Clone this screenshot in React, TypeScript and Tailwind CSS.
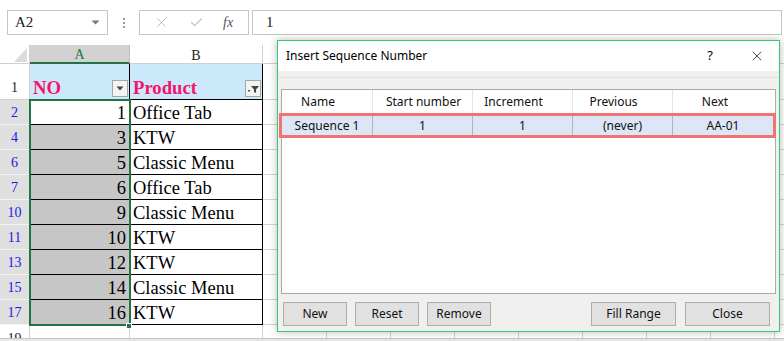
import React from 'react';
import { X, Check } from 'lucide-react';

const rows = [
  { n: '2', a: '1', b: 'Office Tab' },
  { n: '4', a: '3', b: 'KTW' },
  { n: '6', a: '5', b: 'Classic Menu' },
  { n: '7', a: '6', b: 'Office Tab' },
  { n: '10', a: '9', b: 'Classic Menu' },
  { n: '11', a: '10', b: 'KTW' },
  { n: '13', a: '12', b: 'KTW' },
  { n: '15', a: '14', b: 'Classic Menu' },
  { n: '17', a: '16', b: 'KTW' },
];

const extraCols = [0, 1, 2, 3, 4, 5, 6, 7, 8];
const serif = "font-['Liberation_Serif','Times_New_Roman',serif]";
const ui = "font-['Noto_Sans','Open_Sans',sans-serif]";

const Gridfill: React.FC = () => (
  <>
    {extraCols.map((c) => (
      <div key={c} className="w-[64px] shrink-0 border-r border-b border-[#d4d4d4]" />
    ))}
  </>
);

const FilterBtn: React.FC<{ funnel?: boolean }> = ({ funnel }) => (
  <div className="w-[16px] h-[17px] border border-[#a6a6a6] bg-[#f3f3f3] flex items-center justify-center mb-[1px]">
    {funnel ? (
      <svg width="12" height="11" viewBox="0 0 12 11">
        <path d="M4 3h8l-3 3.5V10l-2-1V6.5z" fill="#444" />
        <path d="M0.5 7h3l-1.5 2z" fill="#444" />
      </svg>
    ) : (
      <svg width="8" height="5" viewBox="0 0 8 5">
        <path d="M0.5 0.5h7L4 4.5z" fill="#444" />
      </svg>
    )}
  </div>
);

const Btn: React.FC<{ label: string; w: string }> = ({ label, w }) => (
  <div className={`${w} h-[24px] border border-[#adadad] bg-[#e1e1e1] flex items-center justify-center text-[12px] text-[#111]`}>
    {label}
  </div>
);

const cols = [
  { w: 'w-[91px]', h: 'Name', hp: 'pr-[18px]', v: 'Sequence 1' },
  { w: 'w-[100px]', h: 'Start number', hp: 'pl-[2px]', v: '1' },
  { w: 'w-[100px]', h: 'Increment', hp: 'pr-[18px]', v: '1' },
  { w: 'w-[100px]', h: 'Previous', hp: 'pr-[18px]', v: '(never)' },
  { w: 'w-[101px]', h: 'Next', hp: 'pr-[17px]', v: 'AA-01' },
];

const App: React.FC = () => {
  return (
    <div className="relative w-[784px] h-[341px] overflow-hidden bg-white">
      {/* formula bar */}
      <div className="h-[45px] flex items-start pt-[10px]">
        <div className={`ml-[7px] w-[101px] h-[25px] border border-[#c6c6c6] flex items-center justify-between pl-[7px] pr-[7px] ${serif} text-[15px] text-[#222]`}>
          <span>A2</span>
          <svg width="9" height="5" viewBox="0 0 9 5">
            <path d="M0.5 0.5h8L4.5 4.5z" fill="#777" />
          </svg>
        </div>
        <div className="w-[31px] h-[25px] flex flex-col items-center justify-center gap-[2px]">
          <span className="w-[2px] h-[2px] bg-[#999]" />
          <span className="w-[2px] h-[2px] bg-[#999]" />
          <span className="w-[2px] h-[2px] bg-[#999]" />
        </div>
        <div className="w-[110px] h-[25px] border border-[#c6c6c6] flex items-center pl-[14px]">
          <X size={15} strokeWidth={1.5} color="#b8b8b8" />
          <Check size={15} strokeWidth={2} color="#c4c4c4" className="ml-[20px]" />
          <span className={`ml-[19px] ${serif} italic text-[14px] text-[#555]`}>fx</span>
        </div>
        <div className={`ml-[3px] mr-[2px] flex-1 h-[25px] border border-[#c6c6c6] flex items-center pl-[13px] ${serif} text-[15px] text-[#222]`}>
          1
        </div>
      </div>

      {/* sheet */}
      <div className={`relative h-[293px] overflow-hidden ${serif}`}>
        {/* column headers */}
        <div className="flex h-[19px]">
          <div className="w-[30px] shrink-0 border-r border-b border-[#d0d0d0] bg-white flex items-end justify-end pr-[2px] pb-[1px]">
            <svg width="13" height="14" viewBox="0 0 13 14">
              <path d="M13 0V14H0z" fill="#dcdcdc" />
            </svg>
          </div>
          <div className="w-[100px] shrink-0 bg-[#d2d2d2] border-r border-[#bdbdbd] border-b-2 border-b-[#217346] flex items-center justify-center pt-[2px] text-[14px] text-[#217346]">
            A
          </div>
          <div className="w-[133px] shrink-0 bg-white border-r border-b border-[#d0d0d0] flex items-center justify-center pt-[2px] text-[14px] text-[#222]">
            B
          </div>
          {extraCols.map((c) => (
            <div key={c} className="w-[64px] shrink-0 border-r border-b border-[#d0d0d0]" />
          ))}
        </div>

        {/* row 1 */}
        <div className="flex h-[36px]">
          <div className="w-[30px] shrink-0 border-r border-b border-[#d0d0d0] flex items-end justify-center pb-[1px] text-[14px] text-[#222]">
            1
          </div>
          <div className="w-[100px] shrink-0 bg-[#cce8fb] border-r border-b border-black flex items-end justify-between pl-[3px] pr-[1px] pb-[1px]">
            <span className="text-[18.7px] font-bold text-[#f5146a] leading-[20px]">NO</span>
            <FilterBtn />
          </div>
          <div className="w-[133px] shrink-0 bg-[#cce8fb] border-r border-b border-black flex items-end justify-between pl-[3px] pr-[1px] pb-[1px]">
            <span className="text-[18.7px] font-bold text-[#f5146a] leading-[20px]">Product</span>
            <FilterBtn funnel />
          </div>
          <Gridfill />
        </div>

        {/* data rows */}
        {rows.map((r, i) => (
          <div key={r.n} className="flex h-[25px]">
            <div className="w-[30px] shrink-0 bg-[#dfdfdf] border-r border-[#c8c8c8] border-b border-b-[#f2f2f2] flex items-end justify-center pb-[1px] text-[14px] text-[#1a1ae6]">
              {r.n}
            </div>
            <div className={`w-[100px] shrink-0 ${i === 0 ? 'bg-white' : 'bg-[#c6c6c6]'} border-r border-b border-black flex items-end justify-end pr-[3px] text-[18.5px] leading-[21px] text-black`}>
              {r.a}
            </div>
            <div className="w-[133px] shrink-0 border-r border-b border-black flex items-end pl-[3px] text-[18.5px] leading-[21px] text-black">
              {r.b}
            </div>
            <Gridfill />
          </div>
        ))}

        {/* row 19 */}
        <div className="flex h-[25px]">
          <div className="w-[30px] shrink-0 border-r border-b border-[#d0d0d0] flex items-start justify-center pt-[3px] text-[14px] text-[#222]">
            19
          </div>
          <div className="w-[100px] shrink-0 border-r border-b border-[#d4d4d4]" />
          <div className="w-[133px] shrink-0 border-r border-b border-[#d4d4d4]" />
          <Gridfill />
        </div>

        {/* selection A2:A17 */}
        <div className="absolute left-[29px] top-[54px] w-[102px] h-[227px] border-2 border-[#217346]" />
        <div className="absolute left-[126px] top-[278px] w-[6px] h-[6px] bg-[#217346] border border-white" />
      </div>
      <div className="h-[3px] border-t border-[#c4c4c4] bg-[#e6e6e6]" />

      {/* dialog */}
      <div className={`absolute left-[277px] top-[40px] w-[503px] h-[292px] border border-[#35c977] bg-[#f0f0f0] shadow-[0_0_8px_rgba(0,0,0,0.28)] flex flex-col ${ui} text-[11.5px] text-black`}>
        <div className="h-[30px] bg-white flex items-center pl-[8px] pr-[14px]">
          <span className="flex-1 text-[12px]">Insert Sequence Number</span>
          <span className="text-[13px] mr-[36px]">?</span>
          <X size={16} strokeWidth={1.2} color="#222" />
        </div>
        <div className="h-[7px] border-b border-[#e2e2e2]" />
        <div className="mt-[11px] mx-[3px] h-[205px] border border-[#a9a9a9] bg-white">
          <div className="flex h-[23px]">
            {cols.map((c) => (
              <div key={c.h} className={`${c.w} shrink-0 border-r border-[#e5e5e5] last:border-r-0 flex items-center justify-center ${c.hp} text-[12px] text-[#111]`}>
                {c.h}
              </div>
            ))}
          </div>
          <div className="relative flex h-[25px] bg-[#dce6f7]">
            {cols.map((c) => (
              <div key={c.h} className={`${c.w} shrink-0 border-r border-[#b4b4b4] last:border-r-0 flex items-center justify-center text-[12px] text-[#111]`}>
                {c.v}
              </div>
            ))}
            <div className="absolute -left-[3px] -right-[1px] top-0 bottom-0 border-[3px] border-[#f37272]" />
          </div>
        </div>
        <div className="mt-[8px] flex items-center pl-[5px] pr-[9px]">
          <Btn label="New" w="w-[64px]" />
          <div className="w-[8px]" />
          <Btn label="Reset" w="w-[64px]" />
          <div className="w-[8px]" />
          <Btn label="Remove" w="w-[64px]" />
          <div className="flex-1" />
          <Btn label="Fill Range" w="w-[85px]" />
          <div className="w-[9px]" />
          <Btn label="Close" w="w-[85px]" />
        </div>
      </div>
    </div>
  );
};

export default App;
